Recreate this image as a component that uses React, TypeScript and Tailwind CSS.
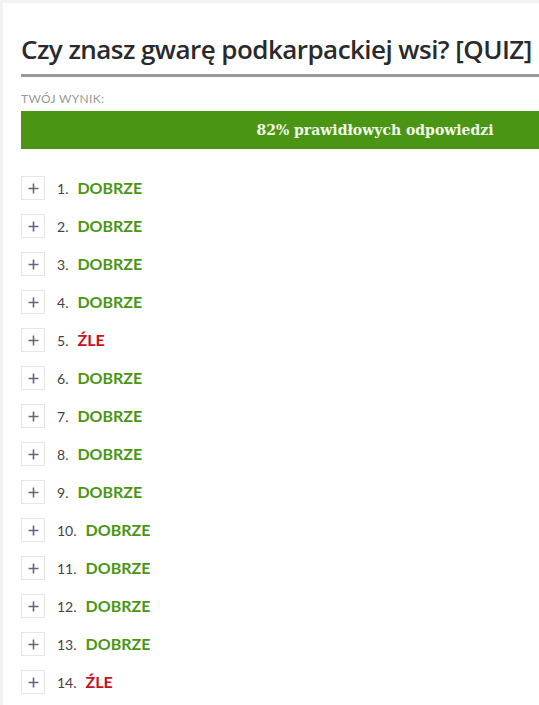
import React from "react";

type Answer = { n: number; ok: boolean };

const answers: Answer[] = [
  { n: 1, ok: true },
  { n: 2, ok: true },
  { n: 3, ok: true },
  { n: 4, ok: true },
  { n: 5, ok: false },
  { n: 6, ok: true },
  { n: 7, ok: true },
  { n: 8, ok: true },
  { n: 9, ok: true },
  { n: 10, ok: true },
  { n: 11, ok: true },
  { n: 12, ok: true },
  { n: 13, ok: true },
  { n: 14, ok: false },
];

const Row: React.FC<{ item: Answer }> = ({ item }) => {
  return (
    <div className="flex h-[38px] items-center">
      <div className="flex h-6 w-6 items-center justify-center border border-[#e6e6e6] bg-white">
        <svg width="11" height="11" viewBox="0 0 11 11">
          <path d="M5.5 0.5v10M0.5 5.5h10" stroke="#5f6b7a" strokeWidth="1.6" />
        </svg>
      </div>
      <span className="ml-3 text-[14px] text-[#444]">{item.n}.</span>
      <span
        className={`ml-[9px] text-[16px] font-bold ${item.ok ? "text-[#4a9614]" : "text-[#c8101e]"}`}
      >
        {item.ok ? "DOBRZE" : "ŹLE"}
      </span>
    </div>
  );
};

const App: React.FC = () => {
  return (
    <div className="h-[705px] w-[539px] overflow-hidden bg-[#f2f2f2] pl-[3px] pt-[3px]">
      <main className="h-full w-[720px] bg-white pl-[18px] font-['Lato',sans-serif]">
        {/* Tytuł */}
        <h1 className="whitespace-nowrap pt-[26px] font-['Open_Sans',sans-serif] text-[26px] font-semibold leading-[40px] tracking-[-0.55px] text-[#2a2a2e]">
          Czy znasz gwarę podkarpackiej wsi? [QUIZ]
        </h1>
        <div className="mt-[5px] h-[3px] bg-[#999]" />

        {/* Wynik */}
        <p className="mt-[14px] text-[12px] uppercase leading-4 tracking-[0.3px] text-[#999]">Twój wynik:</p>
        <div className="mt-[4px] flex h-[38px] w-[708px] items-center justify-center bg-[#4a9614]">
          <span className="font-['DejaVu_Serif',serif] text-[14px] font-bold text-[#f2f7ea]">
            82% prawidłowych odpowiedzi
          </span>
        </div>

        {/* Lista odpowiedzi */}
        <div className="mt-[20px]">
          {answers.map((a) => (
            <Row key={a.n} item={a} />
          ))}
        </div>
      </main>
    </div>
  );
};

export default App;
